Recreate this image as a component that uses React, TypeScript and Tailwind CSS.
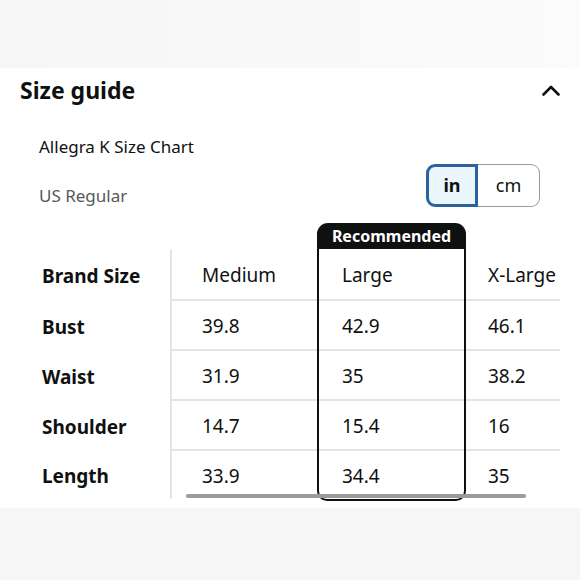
import React from "react";

type Col = {
  name: string;
  values: string[];
};

const labels = ["Bust", "Waist", "Shoulder", "Length"];

const cols: Col[] = [
  { name: "Medium", values: ["39.8", "31.9", "14.7", "33.9"] },
  { name: "Large", values: ["42.9", "35", "15.4", "34.4"] },
  { name: "X-Large", values: ["46.1", "38.2", "16", "35"] },
];

// row heights: header, 3 middle rows, last row
const rowClass = (i: number) =>
  i === 0 ? "h-[52px] border-b-2" : i === 4 ? "h-[48px]" : "h-[50px] border-b-2";

function Cell({ text, i, pad }: { text: string; i: number; pad: string }) {
  return (
    <div
      className={`${rowClass(i)} border-[#e4e4e4] flex items-center pt-[2px] ${pad} whitespace-nowrap`}
    >
      {text}
    </div>
  );
}

export default function App() {
  return (
    <div
      className="w-[580px] h-[580px] bg-[#f7f7f7] flex flex-col overflow-hidden text-[#0f1111]"
      style={{ fontFamily: '"Noto Sans", "Open Sans", sans-serif' }}
    >
      <div className="h-[68px] shrink-0 bg-gradient-to-r from-[#f6f6f6] to-[#fbfbfb]" />

      <div className="bg-white h-[440px] shrink-0 flex flex-col">
        {/* Header */}
        <div className="h-[44px] flex items-center justify-between pl-[20px] pr-[20px]">
          <h2 className="text-[23px] font-bold leading-8">Size guide</h2>
          <svg width="18" height="11" viewBox="0 0 18 11" fill="none">
            <polyline
              points="1.5,9.5 9,2 16.5,9.5"
              stroke="#0f1111"
              strokeWidth="2.6"
              strokeLinecap="round"
              strokeLinejoin="round"
            />
          </svg>
        </div>

        {/* Chart name + unit toggle */}
        <div className="mt-[23px] flex items-end justify-between pl-[39px] pr-[40px]">
          <div className="flex flex-col gap-[25px] text-[17px] leading-6">
            <div>Allegra K Size Chart</div>
            <div className="text-[#565959]">US Regular</div>
          </div>
          <div className="flex h-[43px] mb-[1px] text-[18px]">
            <div className="w-[52px] flex items-center justify-center border-[3px] border-[#2a63a0] bg-[#ecf6fd] rounded-l-[9px] font-bold">
              in
            </div>
            <div className="w-[62px] flex items-center justify-center border-[1.5px] border-l-0 border-[#9a9a9a] rounded-r-[9px]">
              cm
            </div>
          </div>
        </div>

        {/* Table */}
        <div className="mt-[15px] flex text-[19px]">
          <div className="w-[170px] shrink-0 flex flex-col font-bold">
            <div className="h-[26px]" />
            <div className="h-[52px] flex items-center pt-[2px] pl-[42px]">Brand Size</div>
            {labels.map((l, i) => (
              <div
                key={l}
                className={`${i === 3 ? "h-[48px]" : "h-[50px]"} flex items-center pt-[2px] pl-[42px]`}
              >
                {l}
              </div>
            ))}
          </div>

          <div className="relative w-[390px] shrink-0 overflow-hidden">
            <div className="flex w-[500px]">
              {/* Medium */}
              <div className="w-[147px] shrink-0 flex flex-col">
                <div className="h-[26px]" />
                <div className="border-l-2 border-[#e4e4e4]">
                  {[cols[0].name, ...cols[0].values].map((v, i) => (
                    <Cell key={i} text={v} i={i} pad="pl-[30px]" />
                  ))}
                </div>
              </div>

              {/* Large - recommended */}
              <div className="w-[149px] shrink-0 flex flex-col">
                <div className="h-[26px] bg-[#0f1111] rounded-t-[11px] flex items-center justify-center text-white text-[16px] font-bold">
                  Recommended
                </div>
                <div className="border-2 border-t-0 border-[#0f1111] rounded-b-[10px] overflow-hidden">
                  {[cols[1].name, ...cols[1].values].map((v, i) => (
                    <Cell key={i} text={v} i={i} pad="pl-[23px]" />
                  ))}
                </div>
              </div>

              {/* X-Large */}
              <div className="w-[150px] shrink-0 flex flex-col">
                <div className="h-[26px]" />
                <div>
                  {[cols[2].name, ...cols[2].values].map((v, i) => (
                    <Cell key={i} text={v} i={i} pad="pl-[22px]" />
                  ))}
                </div>
              </div>
            </div>

            {/* scrollbar */}
            <div className="absolute left-[16px] top-[271px] w-[340px] h-[4px] rounded-full bg-[#9b9b9b]" />
          </div>
        </div>
      </div>

      <div className="flex-1 bg-[#f6f6f6]" />
    </div>
  );
}
